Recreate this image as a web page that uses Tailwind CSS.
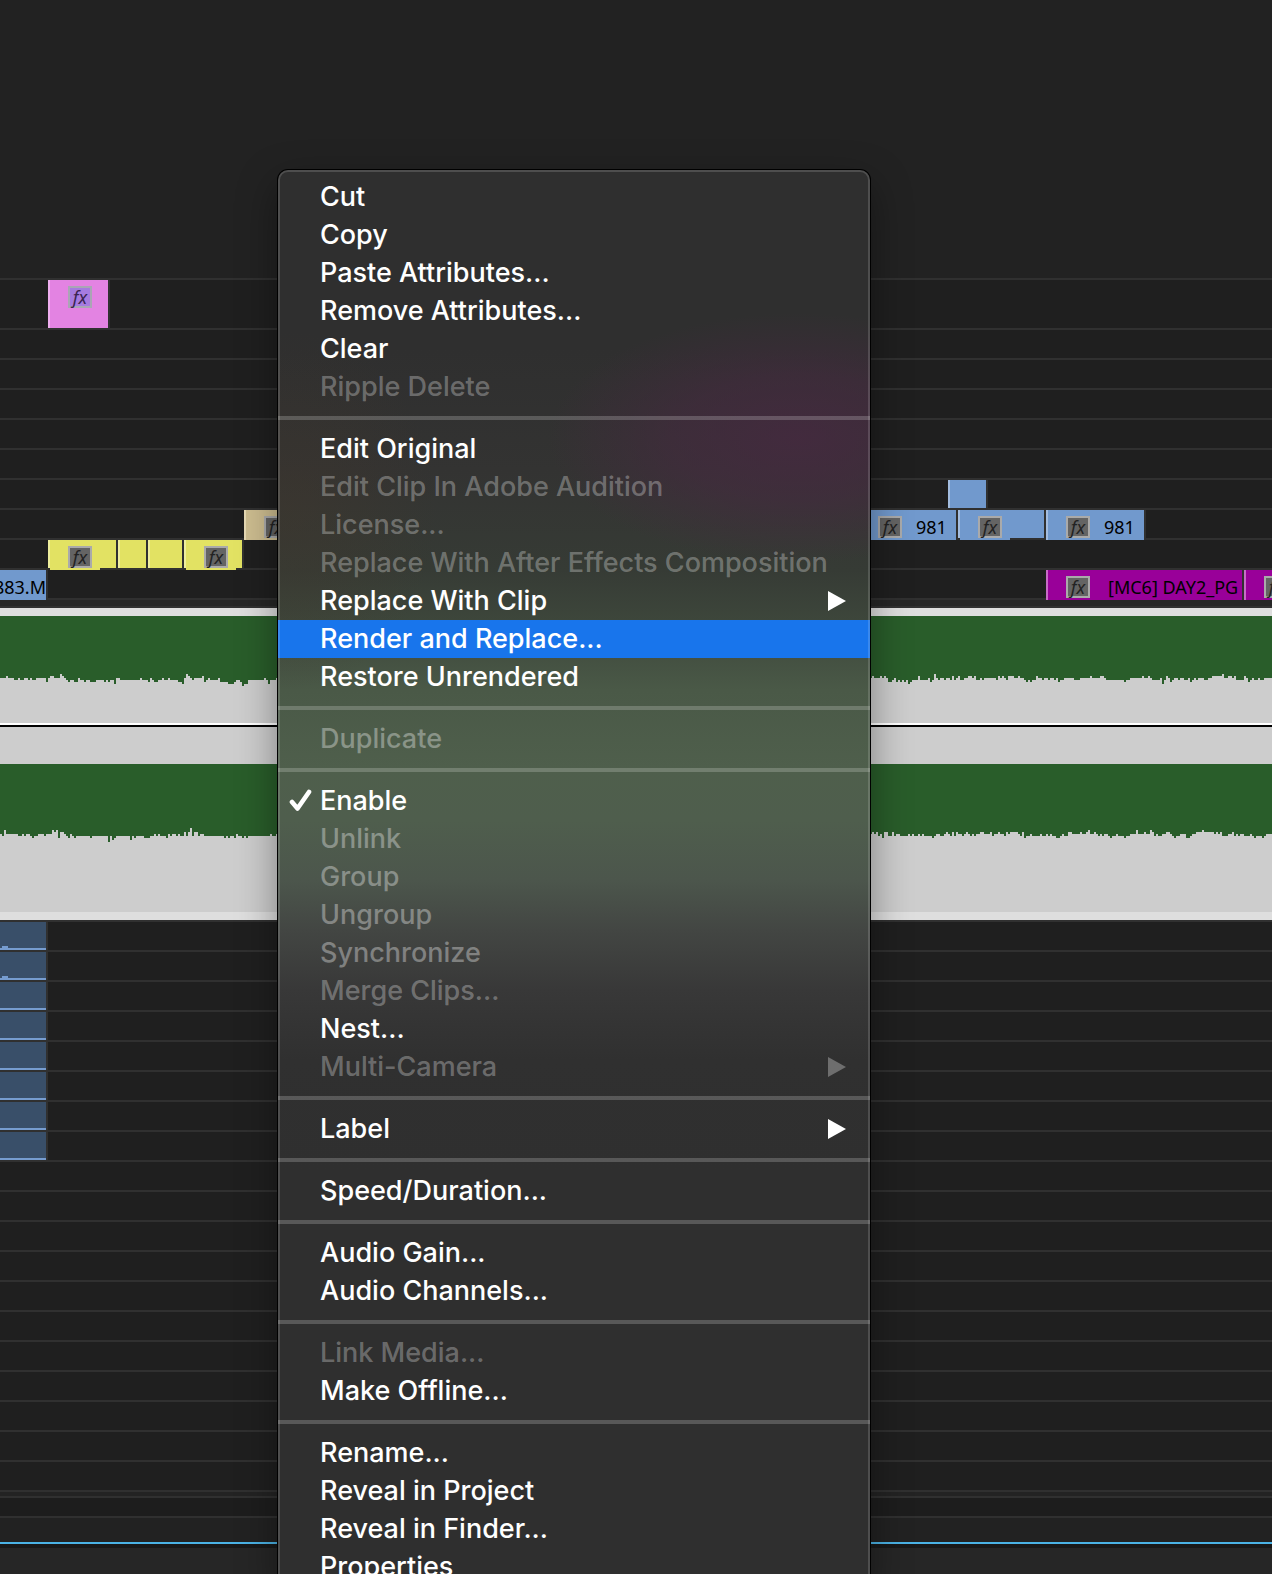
<!DOCTYPE html>
<html lang="en">
<head>
  <meta charset="UTF-8">
  <meta name="viewport" content="width=device-width, initial-scale=1.0">
  <title>Timeline</title>
  <script src="https://cdn.jsdelivr.net/npm/@tailwindcss/browser@4"></script>
</head>
<body class="bg-[#262626]">
<div class="relative h-screen overflow-hidden">

  <!-- Timeline -->
  <main class="font-['Noto_Sans',sans-serif] text-[18px] leading-[30px] text-black">
    <div class="h-[280px] bg-[#222222] border-b-2 border-[#303030]"></div>

    <!-- Video tracks -->
    <section class="bg-[#1f1f1f]">
      <div class="h-[50px] border-b-2 border-[#303030] flex items-start">
        <div class="ml-12 w-[62px] h-12 bg-[#e383e2] border-l-2 border-l-[#efaeef] border-r-2 border-r-[#303030] pl-[18px] pt-1.5">
          <span class="flex items-center justify-center w-6 h-[22px] border-2 border-[#aaa5b5] bg-[#a67be0] text-[#3a2350] italic leading-none">fx</span>
        </div>
      </div>
      <div class="h-[30px] border-b-2 border-[#303030]"></div>
      <div class="h-[30px] border-b-2 border-[#303030]"></div>
      <div class="h-[30px] border-b-2 border-[#303030]"></div>
      <div class="h-[30px] border-b-2 border-[#303030]"></div>
      <div class="h-[30px] border-b-2 border-[#303030]"></div>
      <div class="h-[30px] border-b-2 border-[#303030] flex items-start">
        <div class="ml-[948px] w-10 h-7 bg-[#7199cd] border-l-2 border-l-[#a3bde0] border-r-2 border-r-[#303030]"></div>
      </div>
      <div class="h-[30px] border-b-2 border-[#303030] flex items-start">
        <div class="ml-[244px] w-[60px] h-[30px] bg-[#cdbd90] border-l-2 border-l-[#e6d9b4] pl-[18px] pt-1.5">
          <span class="flex items-center justify-center w-6 h-[22px] border-2 border-[#aaa] bg-[#646464] text-[#222] italic leading-none">fx</span>
        </div>
        <div class="ml-[554px] w-[100px] h-[30px] bg-[#7199cd] border-r-2 border-r-[#303030] pl-5 flex gap-[14px]">
          <span class="mt-1.5 flex items-center justify-center w-6 h-[22px] border-2 border-[#aaa] bg-[#646464] text-[#222] italic leading-none">fx</span>
          <span class="leading-[34px]">981</span>
        </div>
        <div class="w-[88px] h-7 bg-[#7199cd] border-l-2 border-l-[#a3bde0] border-r-2 border-r-[#303030]">
          <div class="w-[50px] h-[30px] bg-[#7199cd] pl-[18px] pt-1.5">
            <span class="flex items-center justify-center w-6 h-[22px] border-2 border-[#aaa] bg-[#646464] text-[#222] italic leading-none">fx</span>
          </div>
        </div>
        <div class="w-[100px] h-[30px] bg-[#7199cd] border-l-2 border-l-[#a3bde0] border-r-2 border-r-[#303030] pl-[18px] flex gap-[14px]">
          <span class="mt-1.5 flex items-center justify-center w-6 h-[22px] border-2 border-[#aaa] bg-[#646464] text-[#222] italic leading-none">fx</span>
          <span class="leading-[34px]">981</span>
        </div>
      </div>
      <div class="h-[30px] border-b-2 border-[#303030] flex items-start">
        <div class="ml-12 w-[70px] h-7 bg-[#e2e263] border-l-2 border-l-[#eeee9c] border-r-2 border-r-[#303030]">
          <div class="w-[50px] h-[30px] bg-[#e2e263] pl-[18px] pt-1.5">
            <span class="flex items-center justify-center w-6 h-[22px] border-2 border-[#aaa] bg-[#646464] text-[#222] italic leading-none">fx</span>
          </div>
        </div>
        <div class="w-[30px] h-7 bg-[#e2e263] border-l-2 border-l-[#eeee9c] border-r-2 border-r-[#303030]"></div>
        <div class="w-9 h-7 bg-[#e2e263] border-l-2 border-l-[#eeee9c] border-r-2 border-r-[#303030]"></div>
        <div class="w-[60px] h-7 bg-[#e2e263] border-l-2 border-l-[#eeee9c] border-r-2 border-r-[#303030]">
          <div class="w-[50px] h-[30px] bg-[#e2e263] pl-[18px] pt-1.5">
            <span class="flex items-center justify-center w-6 h-[22px] border-2 border-[#aaa] bg-[#646464] text-[#222] italic leading-none">fx</span>
          </div>
        </div>
      </div>
      <div class="h-[30px] border-b-2 border-[#303030] flex items-start">
        <div class="w-12 h-[30px] bg-[#7199cd] border-r-2 border-[#303030] flex justify-end overflow-hidden">
          <span class="leading-[34px]">883.M</span>
        </div>
        <div class="ml-[998px] w-[198px] h-[30px] bg-[#990099] border-l-2 border-l-[#c76bc7] border-r-2 border-r-[#303030] pl-[18px] flex gap-[18px] overflow-hidden">
          <span class="mt-1.5 flex shrink-0 items-center justify-center w-6 h-[22px] border-2 border-[#aaa] bg-[#646464] text-[#222] italic leading-none">fx</span>
          <span class="leading-[34px] whitespace-nowrap">[MC6] DAY2_PG</span>
        </div>
        <div class="flex-1 h-[30px] bg-[#990099] border-l-2 border-l-[#c76bc7] pl-[18px] pt-1.5 overflow-hidden">
          <span class="flex items-center justify-center w-6 h-[22px] border-2 border-[#aaa] bg-[#646464] text-[#222] italic leading-none">fx</span>
        </div>
      </div>
    </section>
    <div class="h-2 bg-[#262626] border-b-2 border-[#303030]"></div>

    <!-- Expanded audio track, left and right channel -->
    <section class="bg-[#cdcdcd] border-y-8 border-[#dedede]">
      <div class="h-[107px]">
        <svg class="block w-full h-20 fill-[#295d2a]" viewBox="0 0 636 40" preserveAspectRatio="none" shape-rendering="crispEdges">
          <path d="M0 0V31H3V30H4V31H7V32H9V31H10V32H12V31H14V32H15V31H16V32H18V31H23V33H24V31H25V30H27V31H30V29H31V30H32V31H33V32H34V33H35V32H37V33H39V31H40V32H42V33H43V32H45V33H48V32H52V33H53V32H54V33H55V32H57V34H58V31H60V32H70V31H71V32H74V33H75V31H76V32H77V33H79V32H81V31H82V32H84V31H85V32H89V33H91V34H92V31H93V29H94V30H95V31H96V32H97V31H101V30H102V33H103V32H104V31H105V32H109V31H110V33H114V34H117V33H118V32H120V33H121V35H122V34H124V32H132V31H133V32H134V34H135V32H138V31H436V30H437V31H440V30H441V31H442V30H443V31H444V33H446V32H447V31H448V33H449V32H450V33H451V32H452V33H453V32H454V34H455V33H456V32H459V30H460V32H464V31H465V33H466V32H467V29H468V31H469V32H470V31H472V32H473V31H475V32H476V30H477V32H478V31H479V30H480V32H482V31H484V30H486V31H487V30H488V32H490V31H491V32H492V31H498V32H499V30H500V31H501V30H502V31H503V32H504V30H507V31H509V30H510V31H512V32H513V33H514V32H515V33H516V32H518V30H519V31H521V32H522V31H524V32H525V31H527V32H528V31H529V33H530V32H532V31H537V32H540V31H545V30H546V31H550V30H552V31H553V32H562V33H563V32H565V31H571V30H572V31H574V30H575V31H576V32H580V31H581V34H582V32H583V30H584V31H585V33H586V32H587V31H589V32H590V31H592V32H594V31H595V33H596V32H597V31H598V32H599V31H602V32H604V31H606V30H611V29H612V31H614V30H616V31H617V30H618V32H622V30H623V31H624V33H625V32H626V31H627V32H629V31H630V32H632V31H636V0Z"/>
        </svg>
      </div>
      <div class="h-1 bg-black border-t-2 border-white"></div>
      <div class="h-[185px] pt-[37px]">
        <svg class="block w-full h-20 fill-[#295d2a]" viewBox="0 0 636 40" preserveAspectRatio="none" shape-rendering="crispEdges">
          <path d="M0 0V35H1V36H2V33H3V35H9V36H11V35H12V36H13V35H15V36H16V37H17V36H19V35H22V36H23V35H26V33H27V34H28V33H29V37H30V34H32V35H33V36H34V37H35V35H36V36H37V37H38V36H45V37H46V36H54V39H55V36H56V38H57V37H58V36H65V38H66V36H67V37H68V36H72V37H75V36H77V35H78V36H79V35H80V36H83V37H84V35H85V36H86V35H88V36H89V35H90V36H92V34H93V36H94V34H95V32H96V36H97V34H99V36H100V35H102V36H112V37H113V36H114V37H115V36H117V37H118V35H119V36H121V37H122V36H123V37H124V36H135V35H136V36H138V35H436V34H437V35H438V34H439V36H440V35H441V37H442V34H444V36H446V34H447V36H448V35H450V36H454V35H455V36H456V35H457V36H459V35H460V36H461V35H462V36H466V37H467V36H468V35H470V36H472V35H473V34H474V35H475V36H476V34H477V36H478V34H479V35H481V36H482V35H483V34H484V35H485V36H486V35H487V36H488V35H490V34H492V35H495V34H496V36H497V35H499V34H500V35H502V36H503V34H504V35H505V34H509V35H510V36H511V34H512V37H513V36H515V35H516V36H520V35H521V36H523V35H524V36H525V35H526V36H528V37H530V36H531V35H532V36H534V34H536V35H540V34H541V35H543V34H544V33H545V35H547V34H548V35H549V36H550V35H551V36H552V35H554V36H555V37H556V36H558V35H559V36H562V37H563V36H565V35H568V33H569V35H572V34H573V35H575V33H576V34H577V36H578V35H579V36H581V35H583V34H585V35H586V36H587V37H588V36H590V35H593V37H595V36H596V35H598V34H601V33H602V34H607V35H608V34H609V35H610V34H611V36H614V35H616V34H617V36H618V35H619V36H620V35H622V36H625V35H626V36H627V37H628V36H631V37H632V36H633V35H636V0Z"/>
        </svg>
      </div>
    </section>
    <div class="h-0.5 bg-[#303030]"></div>

    <!-- Audio tracks -->
    <section class="bg-[#1f1f1f]">
      <div class="h-[30px] border-b-2 border-[#303030] flex">
        <div class="w-12 bg-[#394f69] border-r-2 border-[#303030] flex flex-col justify-end">
          <div class="ml-0.5 w-1.5 h-0.5 bg-[#769ccf]"></div><div class="h-0.5 bg-[#769ccf]"></div>
        </div>
      </div>
      <div class="h-[30px] border-b-2 border-[#303030] flex">
        <div class="w-12 bg-[#394f69] border-r-2 border-[#303030] flex flex-col justify-end">
          <div class="ml-0.5 w-1.5 h-0.5 bg-[#769ccf]"></div><div class="h-0.5 bg-[#769ccf]"></div>
        </div>
      </div>
      <div class="h-[30px] border-b-2 border-[#303030] flex"><div class="w-12 bg-[#394f69] border-r-2 border-[#303030] flex items-end"><div class="w-full h-0.5 bg-[#769ccf]"></div></div></div>
      <div class="h-[30px] border-b-2 border-[#303030] flex"><div class="w-12 bg-[#394f69] border-r-2 border-[#303030] flex items-end"><div class="w-full h-0.5 bg-[#769ccf]"></div></div></div>
      <div class="h-[30px] border-b-2 border-[#303030] flex"><div class="w-12 bg-[#394f69] border-r-2 border-[#303030] flex items-end"><div class="w-full h-0.5 bg-[#769ccf]"></div></div></div>
      <div class="h-[30px] border-b-2 border-[#303030] flex"><div class="w-12 bg-[#394f69] border-r-2 border-[#303030] flex items-end"><div class="w-full h-0.5 bg-[#769ccf]"></div></div></div>
      <div class="h-[30px] border-b-2 border-[#303030] flex"><div class="w-12 bg-[#394f69] border-r-2 border-[#303030] flex items-end"><div class="w-full h-0.5 bg-[#769ccf]"></div></div></div>
      <div class="h-[30px] border-b-2 border-[#303030] flex"><div class="w-12 bg-[#394f69] border-r-2 border-[#303030] flex items-end"><div class="w-full h-0.5 bg-[#769ccf]"></div></div></div>
      <div class="h-[30px] border-b-2 border-[#303030]"></div>
      <div class="h-[30px] border-b-2 border-[#303030]"></div>
      <div class="h-[30px] border-b-2 border-[#303030]"></div>
      <div class="h-[30px] border-b-2 border-[#303030]"></div>
      <div class="h-[30px] border-b-2 border-[#303030]"></div>
      <div class="h-[30px] border-b-2 border-[#303030]"></div>
      <div class="h-[30px] border-b-2 border-[#303030]"></div>
      <div class="h-[30px] border-b-2 border-[#303030]"></div>
      <div class="h-[30px] border-b-2 border-[#303030]"></div>
      <div class="h-[30px] border-b-2 border-[#303030]"></div>
      <div class="h-[30px] border-b-2 border-[#303030]"></div>
    </section>
    <div class="h-1.5 bg-[#232323] border-b-2 border-[#303030]"></div>
    <div class="h-5 bg-[#1d1d1d] border-b-2 border-[#303030]"></div>
    <div class="h-[26px] bg-[#222222] border-b-2 border-[#4bb3e6]"></div>
    <div class="h-1 bg-[#191919]"></div>
  </main>

  <!-- Clip context menu -->
  <div role="menu" class="absolute left-[278px] top-[170px] w-[592px] pt-2 pb-2 rounded-[10px] overflow-hidden font-[Inter,sans-serif] font-medium text-[27px] leading-[38px] text-white shadow-[0_0_0_1px_#000,0_14px_40px_rgba(0,0,0,0.4)] bg-[radial-gradient(250px_125px_at_520px_268px,rgba(72,40,66,0.75),rgba(72,40,66,0.5)_50%,transparent),radial-gradient(150px_180px_at_10px_340px,rgba(66,54,42,0.4),transparent),linear-gradient(#2f2f2f_0px,#2f2f2f_180px,#333332_300px,#363b35_400px,#3d463b_450px,#4a5947_520px,#4f5f4c_600px,#4f5e4d_650px,#4c564c_710px,#434643_760px,#383838_820px,#303030_890px,#2f2f2f_1000px)]">
    <button role="menuitem" class="block w-full h-[38px] pl-[42px] text-left">Cut</button>
    <button role="menuitem" class="block w-full h-[38px] pl-[42px] text-left">Copy</button>
    <button role="menuitem" class="block w-full h-[38px] pl-[42px] text-left">Paste Attributes...</button>
    <button role="menuitem" class="block w-full h-[38px] pl-[42px] text-left">Remove Attributes...</button>
    <button role="menuitem" class="block w-full h-[38px] pl-[42px] text-left">Clear</button>
    <button role="menuitem" disabled class="block w-full h-[38px] pl-[42px] text-left text-white/30">Ripple Delete</button>
    <hr class="my-[10px] border-t-4 border-white/20">
    <button role="menuitem" class="block w-full h-[38px] pl-[42px] text-left">Edit Original</button>
    <button role="menuitem" disabled class="block w-full h-[38px] pl-[42px] text-left text-white/30">Edit Clip In Adobe Audition</button>
    <button role="menuitem" disabled class="block w-full h-[38px] pl-[42px] text-left text-white/30">License...</button>
    <button role="menuitem" disabled class="block w-full h-[38px] pl-[42px] text-left text-white/30 whitespace-nowrap">Replace With After Effects Composition</button>
    <button role="menuitem" class="flex items-center justify-between w-full h-[38px] pl-[42px] pr-6 text-left">
      Replace With Clip
      <svg class="w-[18px] h-5 fill-white" viewBox="0 0 18 20"><path d="M0 0L18 10L0 20Z"/></svg>
    </button>
    <button role="menuitem" class="block w-full h-[38px] pl-[42px] text-left bg-[#1875ec]">Render and Replace...</button>
    <button role="menuitem" class="block w-full h-[38px] pl-[42px] text-left">Restore Unrendered</button>
    <hr class="my-[10px] border-t-4 border-white/20">
    <button role="menuitem" disabled class="block w-full h-[38px] pl-[42px] text-left text-white/35">Duplicate</button>
    <hr class="my-[10px] border-t-4 border-white/20">
    <button role="menuitemcheckbox" aria-checked="true" class="flex items-center gap-2 w-full h-[38px] pl-[11px] text-left">
      <svg class="w-[23px] h-6 fill-none stroke-white" viewBox="0 0 23 24" stroke-width="4.600" stroke-linecap="round" stroke-linejoin="round"><path d="M3 13L8.500 19.500L20 3"/></svg>
      Enable
    </button>
    <button role="menuitem" disabled class="block w-full h-[38px] pl-[42px] text-left text-white/35">Unlink</button>
    <button role="menuitem" disabled class="block w-full h-[38px] pl-[42px] text-left text-white/35">Group</button>
    <button role="menuitem" disabled class="block w-full h-[38px] pl-[42px] text-left text-white/35">Ungroup</button>
    <button role="menuitem" disabled class="block w-full h-[38px] pl-[42px] text-left text-white/35">Synchronize</button>
    <button role="menuitem" disabled class="block w-full h-[38px] pl-[42px] text-left text-white/30">Merge Clips...</button>
    <button role="menuitem" class="block w-full h-[38px] pl-[42px] text-left">Nest...</button>
    <button role="menuitem" disabled class="flex items-center justify-between w-full h-[38px] pl-[42px] pr-6 text-left text-white/30">
      Multi-Camera
      <svg class="w-[18px] h-5 fill-white/30" viewBox="0 0 18 20"><path d="M0 0L18 10L0 20Z"/></svg>
    </button>
    <hr class="my-[10px] border-t-4 border-white/20">
    <button role="menuitem" class="flex items-center justify-between w-full h-[38px] pl-[42px] pr-6 text-left">
      Label
      <svg class="w-[18px] h-5 fill-white" viewBox="0 0 18 20"><path d="M0 0L18 10L0 20Z"/></svg>
    </button>
    <hr class="my-[10px] border-t-4 border-white/20">
    <button role="menuitem" class="block w-full h-[38px] pl-[42px] text-left">Speed/Duration...</button>
    <hr class="my-[10px] border-t-4 border-white/20">
    <button role="menuitem" class="block w-full h-[38px] pl-[42px] text-left">Audio Gain...</button>
    <button role="menuitem" class="block w-full h-[38px] pl-[42px] text-left">Audio Channels...</button>
    <hr class="my-[10px] border-t-4 border-white/20">
    <button role="menuitem" disabled class="block w-full h-[38px] pl-[42px] text-left text-white/30">Link Media...</button>
    <button role="menuitem" class="block w-full h-[38px] pl-[42px] text-left">Make Offline...</button>
    <hr class="my-[10px] border-t-4 border-white/20">
    <button role="menuitem" class="block w-full h-[38px] pl-[42px] text-left">Rename...</button>
    <button role="menuitem" class="block w-full h-[38px] pl-[42px] text-left">Reveal in Project</button>
    <button role="menuitem" class="block w-full h-[38px] pl-[42px] text-left">Reveal in Finder...</button>
    <button role="menuitem" class="block w-full h-[38px] pl-[42px] text-left">Properties</button>
    <!-- light edge drawn over the rows -->
    <div class="absolute inset-0 rounded-[10px] border-2 border-white/15 pointer-events-none"></div>
  </div>

</div>
</body>
</html>
